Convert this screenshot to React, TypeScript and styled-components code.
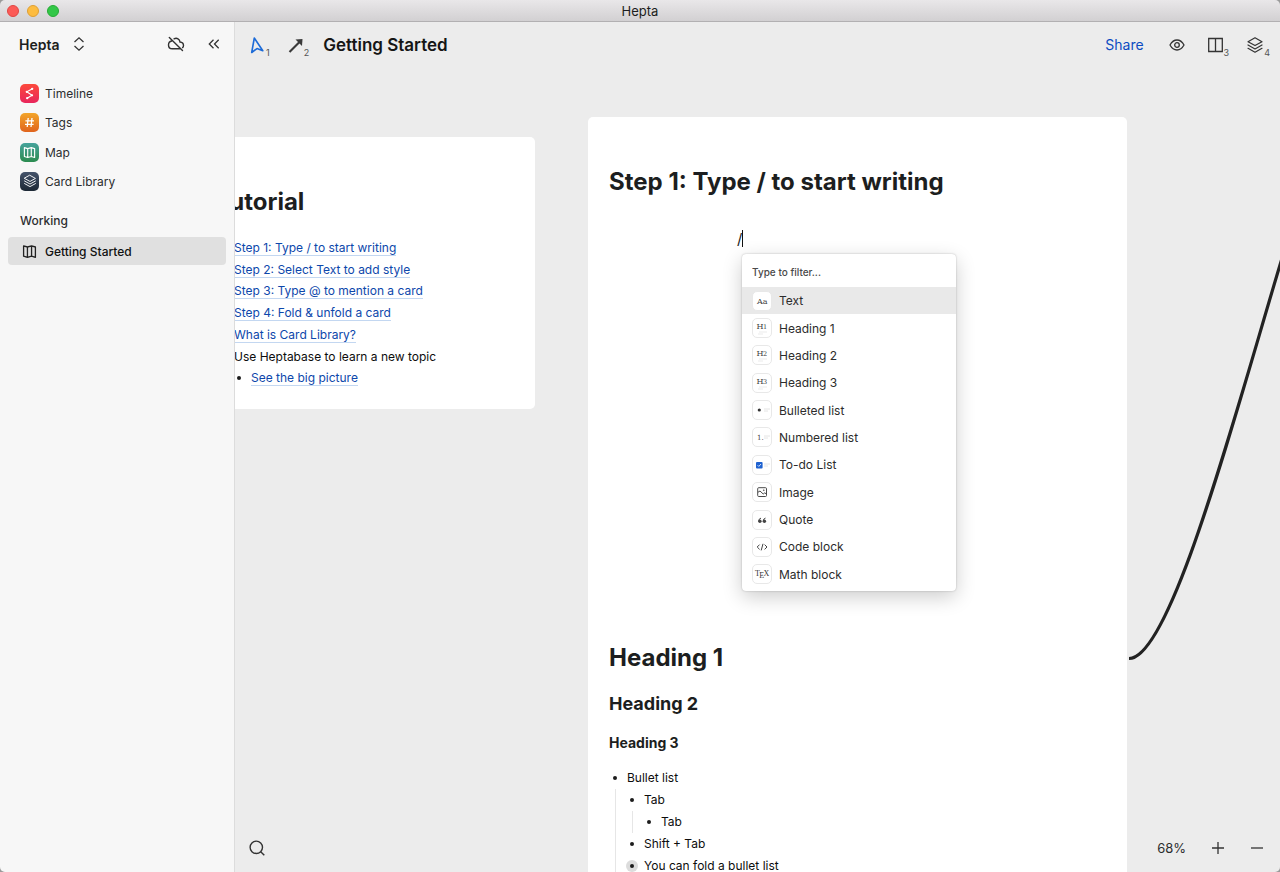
import React from "react";
import styled, { createGlobalStyle, css } from "styled-components";

const Global = createGlobalStyle`
  * { box-sizing: border-box; }
  body { margin: 0; background: #9a9a9a; font-family: Inter, "Liberation Sans", sans-serif; color: #1c1e20; }
  button, input { font: inherit; color: inherit; }
  button { border: 0; padding: 0; background: none; display: flex; align-items: center; cursor: pointer; }
  ul { list-style: none; margin: 0; padding: 0; }
  h1, h2, h3, h4 { margin: 0; }
  svg { display: block; flex: none; }
`;

const Window = styled.div`
  min-height: 100vh;
  display: flex;
  flex-direction: column;
  border-radius: 5px;
  overflow: hidden;
`;

const TitleBar = styled.header`
  position: relative;
  height: 22px;
  display: flex;
  align-items: center;
  justify-content: center;
  background: linear-gradient(#e9e7e9, #d2d0d2);
  border-bottom: 1px solid #b2b0b2;
  font-size: 13px;
  line-height: 16px;
`;

const Lights = styled.div`
  position: absolute;
  left: 7px;
  top: 5px;
  display: flex;
  gap: 8px;
`;

const Light = styled.button<{ $fill: string; $edge: string }>`
  width: 12px;
  height: 12px;
  border-radius: 50%;
  background: ${(p) => p.$fill};
  border: 1px solid ${(p) => p.$edge};
`;

const Body = styled.div`
  flex: 1;
  display: flex;
`;

const Sidebar = styled.aside`
  width: 235px;
  flex: none;
  background: #f7f7f7;
  border-right: 1px solid #dcdcdc;
  padding: 11px 8px;
`;

const SidebarTop = styled.div`
  display: flex;
  align-items: center;
  height: 22px;
  padding: 0 5px 0 11px;
`;

const Workspace = styled.button`
  gap: 12px;
  margin-right: auto;
  font-size: 14px;
  font-weight: 600;
`;

const Collapse = styled.button`
  margin-left: 22px;
`;

const Nav = styled.nav`
  display: grid;
  grid-auto-rows: 1fr;
  height: 117px;
  margin-top: 24px;
`;

const NavItem = styled.a<{ $active?: boolean }>`
  display: flex;
  align-items: center;
  gap: 6px;
  padding: 0 12px;
  font-size: 12px;
  color: #2b2d2f;
  text-decoration: none;
  ${(p) =>
    p.$active &&
    css`
      height: 28px;
      border-radius: 4px;
      background: #e0e0e0;
      color: #111;
      font-weight: 500;
    `}
`;

const Badge = styled.span<{ $from: string; $to: string }>`
  width: 19px;
  height: 19px;
  border-radius: 5px;
  display: flex;
  align-items: center;
  justify-content: center;
  background: linear-gradient(${(p) => p.$from}, ${(p) => p.$to});
`;

const PlainIcon = styled.span`
  width: 19px;
  display: flex;
  justify-content: center;
`;

const SectionTitle = styled.h2`
  padding: 0 12px;
  margin: 16px 0 7px;
  font-size: 12px;
  line-height: 18px;
  font-weight: 500;
  color: #2b2d2f;
`;

const Stage = styled.main`
  position: relative;
  flex: 1;
  min-width: 0;
  overflow: hidden;
  background: #ececec;
  display: flex;
  flex-direction: column;
  justify-content: space-between;
`;

const Board = styled.div`
  position: absolute;
  inset: 0;
  overflow: hidden;
`;

const Connector = styled.svg`
  position: absolute;
  left: 885px;
  top: 228px;
`;

const Bar = styled.div<{ $bottom?: boolean }>`
  position: relative;
  height: ${(p) => (p.$bottom ? 48 : 45)}px;
  padding: 0 10px 0 14px;
  display: flex;
  align-items: center;
`;

const Tools = styled.div`
  display: flex;
  align-items: center;
  gap: 17px;
`;

const BoardTitle = styled.h1`
  margin-left: 14px;
  margin-right: auto;
  font-size: 17px;
  line-height: 24px;
  font-weight: 600;
  color: #151515;
`;

const Key = styled.sub`
  font-size: 9px;
  line-height: 10px;
  vertical-align: baseline;
  align-self: flex-end;
  margin-bottom: -4px;
  color: #555;
`;

const Share = styled.button`
  margin-right: 25px;
  font-size: 14px;
  color: #0b4bc2;
`;

const View = styled.button`
  margin-right: 22px;
`;

const Zoom = styled.span`
  margin-left: auto;
  font-size: 13px;
  color: #2b2d2f;
`;

const ZoomButton = styled.button`
  margin-left: 25px;
  &:last-child { margin-right: 6px; }
`;

const Card = styled.article<{ $x: number; $y: number; $w: number }>`
  position: absolute;
  left: ${(p) => p.$x}px;
  top: ${(p) => p.$y}px;
  width: ${(p) => p.$w}px;
  padding: 48px 21px 20px;
  background: #fff;
  border-radius: 5px;
`;

const CardTitle = styled.h2`
  font-size: 24px;
  line-height: 34px;
  font-weight: 700;
`;

const Links = styled.ul`
  display: grid;
  grid-auto-rows: 1fr;
  height: 152px;
  margin-top: 18px;
  padding-left: 19px;
  font-size: 12px;
  color: #0d0d0d;
`;

const LinkRow = styled.li<{ $bullet?: boolean }>`
  display: flex;
  align-items: center;
  gap: 10px;
  white-space: nowrap;
  padding-left: ${(p) => (p.$bullet ? 3 : 0)}px;
`;

const CardLink = styled.a`
  line-height: 15px;
  color: #0d47ab;
  text-decoration: none;
  border-bottom: 1px solid #c3d7f1;
`;

const Dot = styled.span`
  width: 4px;
  height: 4px;
  flex: none;
  border-radius: 50%;
  background: #1c1c1c;
`;

const Typed = styled.div`
  height: 416px;
  margin-top: 26px;
  padding-left: 128px;
  font-size: 15px;
  line-height: 28px;
  display: flex;
  align-items: flex-start;
`;

const Caret = styled.span`
  width: 1px;
  height: 17px;
  margin-top: 5px;
  background: #111;
`;

const Sub = styled.h3`
  margin-top: 15px;
  font-size: 18px;
  line-height: 28px;
  font-weight: 700;
`;

const SubSub = styled.h4`
  margin-top: 14px;
  font-size: 14px;
  line-height: 22px;
  font-weight: 700;
`;

const Bullets = styled.ul`
  margin-top: 13px;
  font-size: 12px;
  line-height: 22px;
  color: #0d0d0d;
`;

const Nested = styled.ul`
  margin-left: 6px;
  padding-left: 11px;
  box-shadow: inset 1px 0 #e6e6e6;
`;

const BulletRow = styled.div`
  display: flex;
  align-items: center;
  gap: 6px;
`;

const Mark = styled.span<{ $folded?: boolean }>`
  width: 12px;
  height: 12px;
  border-radius: 50%;
  display: flex;
  align-items: center;
  justify-content: center;
  background: ${(p) => (p.$folded ? "#dcdcdc" : "transparent")};
`;

const Menu = styled.div`
  position: absolute;
  left: 507px;
  top: 232px;
  width: 214px;
  padding-bottom: 3px;
  border-radius: 4px;
  background: #fff;
  box-shadow: 0 0 2px rgba(0, 0, 0, 0.25), 0 6px 20px rgba(0, 0, 0, 0.2);
`;

const Filter = styled.input`
  display: block;
  width: 100%;
  height: 33px;
  padding: 3px 10px 0;
  border: 0;
  outline: 0;
  background: transparent;
  && { font-size: 10px; font-weight: 500; }
  &::placeholder { color: #4a4a4a; opacity: 1; }
`;

const MenuList = styled.div`
  display: grid;
  grid-auto-rows: 1fr;
  height: 301px;
`;

const MenuItem = styled.button<{ $active?: boolean }>`
  && {
    padding: 0 10px;
    gap: 7px;
    font-size: 12px;
    color: #2c2c2c;
    background: ${(p) => (p.$active ? "#e9e9e9" : "transparent")};
  }
`;

const Tile = styled.span`
  width: 20px;
  height: 20px;
  border: 1px solid #e8e8e8;
  border-radius: 5px;
  background: #fff;
`;

const serif = { fontFamily: '"DejaVu Serif", serif', fill: "#3f3f3f" };

const Heading = ({ n }: { n: number }) => (
  <>
    <text x="3.5" y="10" fontSize="8" {...serif}>H</text>
    <text x="10" y="10" fontSize="6.5" {...serif}>{n}</text>
    <path d="M6 13h8M5 15h5" stroke="#ebebeb" strokeWidth="1" />
  </>
);

const lines = <path d="M11 8h6M11 10h4" stroke="#e4e4e4" />;

const menuItems: [string, React.ReactNode][] = [
  ["Text", <text x="4" y="12" fontSize="8" {...serif}>Aa</text>],
  ["Heading 1", <Heading n={1} />],
  ["Heading 2", <Heading n={2} />],
  ["Heading 3", <Heading n={3} />],
  ["Bulleted list", <><circle cx="6.3" cy="9" r="1.6" fill="#333" />{lines}</>],
  ["Numbered list", <><text x="4" y="12" fontSize="7" {...serif}>1.</text>{lines}</>],
  ["To-do List", <><rect x="3" y="6" width="6.6" height="6.4" rx="1" fill="#1f62d0" /><path d="m4.6 9.2 1.2 1.2 2.2-2.4" fill="none" stroke="#fff" strokeWidth=".8" />{lines}</>],
  ["Image", <g fill="none" stroke="#4a4a4a" strokeWidth="1"><rect x="4.7" y="4.7" width="8.8" height="8.8" rx="1" /><path d="m5 9.2 2-1.2 3.200 3 1.600-1.200 1.700 1.400" /><circle cx="10.800" cy="7.200" r=".4" /></g>],
  ["Quote", <g fill="#444"><circle cx="6.900" cy="10.300" r="1.700" /><circle cx="11.400" cy="10.300" r="1.700" /><path d="M5.700 10.300q0-2.700 2.300-3.200M10.200 10.300q0-2.700 2.300-3.200" fill="none" stroke="#444" strokeWidth="1" /></g>],
  ["Code block", <path d="M6.600 6.600 4.200 9l2.400 2.400M11.600 6.600 14 9l-2.400 2.400M10 5.800 8.200 12.400" fill="none" stroke="#444" strokeWidth="1" />],
  ["Math block", <g fontFamily='"Liberation Serif", serif' fill="#333"><text x="2" y="11" fontSize="8">T</text><text x="6.300" y="13" fontSize="8">E</text><text x="10.500" y="11" fontSize="8">X</text></g>],
];

const MapIcon = ({ size, color }: { size: number; color: string }) => (
  <svg width={size} height={size} viewBox="0 0 16 16" fill="none" stroke={color} strokeWidth="1.400" strokeLinejoin="round">
    <path d="M1.700 2 5.800 3.200v11L1.700 13zM5.800 3.200 10.200 2v11l-4.400 1.200zM10.200 2l4.100 1.200v11L10.200 13z" />
  </svg>
);

const LayersIcon = ({ size, color }: { size: number; color: string }) => (
  <svg width={size} height={size} viewBox="0 0 18 18" fill="none" stroke={color} strokeWidth="1.200" strokeLinejoin="round" strokeLinecap="round">
    <path d="M9 1.800 16 5.700 9 9.600 2 5.700zM2 9l7 3.900L16 9M2 12.300l7 3.900 7-3.900" />
  </svg>
);

const links = [
  "Step 1: Type / to start writing",
  "Step 2: Select Text to add style",
  "Step 3: Type @ to mention a card",
  "Step 4: Fold & unfold a card",
  "What is Card Library?",
];

const Bullet = ({ text, folded }: { text: string; folded?: boolean }) => (
  <BulletRow>
    <Mark $folded={folded}><Dot /></Mark>
    {text}
  </BulletRow>
);

export default function App() {
  return (
    <Window>
      <Global />
      <TitleBar>
        <Lights>
          <Light aria-label="Close" $fill="#fc5b57" $edge="#df4744" />
          <Light aria-label="Minimize" $fill="#fdbc40" $edge="#de9f34" />
          <Light aria-label="Maximize" $fill="#33c748" $edge="#27aa35" />
        </Lights>
        Hepta
      </TitleBar>
      <Body>
        <Sidebar>
          <SidebarTop>
            <Workspace>
              Hepta
              <svg width="14" height="16" viewBox="0 0 14 16" fill="none" stroke="#333" strokeWidth="1.300">
                <path d="M2.500 6 7 1.800 11.500 6M2.500 10 7 14.200 11.500 10" />
              </svg>
            </Workspace>
            <button aria-label="Offline">
              <svg width="18" height="16" viewBox="0 0 18 16" fill="none" stroke="#333" strokeWidth="1.400" strokeLinecap="round">
                <path d="M2.300 1.500 15.500 14.500M4.700 5C2.800 5.400 1.500 7 1.500 9c0 2.300 1.700 3.800 3.800 3.800h7.500M7 2.800c3-1.300 5.700.3 6 3.200 2 .2 3.500 1.600 3.500 3.400 0 .8-.3 1.700-.9 2.200" />
              </svg>
            </button>
            <Collapse aria-label="Collapse sidebar">
              <svg width="14" height="14" viewBox="0 0 14 14" fill="none" stroke="#333" strokeWidth="1.300">
                <path d="M6.500 2.800 2.300 7l4.200 4.200M11.700 2.800 7.500 7l4.200 4.200" />
              </svg>
            </Collapse>
          </SidebarTop>
          <Nav>
            <NavItem href="#timeline">
              <Badge $from="#fc4a3c" $to="#e8265c">
                <svg width="19" height="19" viewBox="0 0 19 19" fill="#fff" stroke="#fff" strokeWidth="1.100">
                  <path d="M12 5 6.800 7.800 12 11.300 7.500 14" fill="none" />
                  <circle cx="12.200" cy="4.800" r=".6" /><circle cx="6.800" cy="7.800" r=".6" /><circle cx="12" cy="11.300" r=".6" /><circle cx="7.200" cy="14.200" r=".6" />
                </svg>
              </Badge>
              Timeline
            </NavItem>
            <NavItem href="#tags">
              <Badge $from="#f3a52a" $to="#e0641e">
                <svg width="19" height="19" viewBox="0 0 19 19" fill="none" stroke="#fff" strokeWidth="1.300">
                  <path d="M8.200 5 7.200 14M12 5l-1 9M5.400 7.800h8.600M5 11.300h8.600" />
                </svg>
              </Badge>
              Tags
            </NavItem>
            <NavItem href="#map">
              <Badge $from="#46a39c" $to="#2c8c50"><MapIcon size={13} color="#fff" /></Badge>
              Map
            </NavItem>
            <NavItem href="#cards">
              <Badge $from="#44536a" $to="#1d2835"><LayersIcon size={14} color="#fff" /></Badge>
              Card Library
            </NavItem>
          </Nav>
          <SectionTitle>Working</SectionTitle>
          <NavItem href="#started" $active>
            <PlainIcon><MapIcon size={15} color="#222" /></PlainIcon>
            Getting Started
          </NavItem>
        </Sidebar>
        <Stage>
          <Board>
            <Connector width="170" height="420" viewBox="0 0 170 420" fill="none" stroke="#222" strokeWidth="3.200">
              <path d="M9 408.500C50 408.500 112 175 160 15L166 -5" />
            </Connector>
            <Card $x={-41} $y={115} $w={341}>
              <CardTitle>Tutorial</CardTitle>
              <Links>
                {links.map((t) => (
                  <LinkRow key={t}><CardLink href="#card">{t}</CardLink></LinkRow>
                ))}
                <LinkRow>Use Heptabase to learn a new topic</LinkRow>
                <LinkRow $bullet><Dot /><CardLink href="#card">See the big picture</CardLink></LinkRow>
              </Links>
            </Card>
            <Card $x={353} $y={95} $w={539}>
              <CardTitle>Step 1: Type / to start writing</CardTitle>
              <Typed>/<Caret /></Typed>
              <CardTitle>Heading 1</CardTitle>
              <Sub>Heading 2</Sub>
              <SubSub>Heading 3</SubSub>
              <Bullets>
                <li>
                  <Bullet text="Bullet list" />
                  <Nested>
                    <li>
                      <Bullet text="Tab" />
                      <Nested><li><Bullet text="Tab" /></li></Nested>
                    </li>
                    <li><Bullet text="Shift + Tab" /></li>
                    <li><Bullet text="You can fold a bullet list" folded /></li>
                  </Nested>
                </li>
              </Bullets>
            </Card>
            <Menu>
              <Filter aria-label="Filter blocks" placeholder="Type to filter..." />
              <MenuList>
                {menuItems.map(([label, art], i) => (
                  <MenuItem key={label} $active={i === 0}>
                    <Tile><svg width="18" height="18" viewBox="0 0 18 18">{art}</svg></Tile>
                    {label}
                  </MenuItem>
                ))}
              </MenuList>
            </Menu>
          </Board>
          <Bar>
            <Tools>
              <button aria-label="Select">
                <svg width="17" height="18" viewBox="0 0 17 18" fill="none" stroke="#1c6bd8" strokeWidth="1.600" strokeLinejoin="round">
                  <path d="M5.300 2 13.800 14.800 8 12.600 2.700 16.500z" />
                </svg>
                <Key>1</Key>
              </button>
              <button aria-label="Connect">
                <svg width="17" height="18" viewBox="0 0 17 18" fill="none" stroke="#3a3a3a" strokeWidth="2.200">
                  <path d="M2.500 16 13 5.500" /><path d="M8.500 3.500 15.500 3 15 10z" fill="#3a3a3a" stroke="none" />
                </svg>
                <Key>2</Key>
              </button>
            </Tools>
            <BoardTitle>Getting Started</BoardTitle>
            <Share>Share</Share>
            <View aria-label="Preview">
              <svg width="16" height="16" viewBox="0 0 16 16" fill="none" stroke="#333" strokeWidth="1.300">
                <path d="M1 8c2-3.600 4.400-5 7-5s5 1.400 7 5c-2 3.600-4.400 5-7 5S3 11.600 1 8z" /><circle cx="8" cy="8" r="2.300" />
              </svg>
            </View>
            <Tools>
              <button aria-label="Split view">
                <svg width="17" height="18" viewBox="0 0 17 18" fill="none" stroke="#333" strokeWidth="1.300">
                  <path d="M1.700 2.500h13.600v13H1.700zM8.500 2.500v13" />
                </svg>
                <Key>3</Key>
              </button>
              <button aria-label="Card library">
                <LayersIcon size={18} color="#333" />
                <Key>4</Key>
              </button>
            </Tools>
          </Bar>
          <Bar $bottom>
            <button aria-label="Search">
              <svg width="16" height="16" viewBox="0 0 16 16" fill="none" stroke="#333" strokeWidth="1.400">
                <circle cx="7.300" cy="7.300" r="6.200" /><path d="m11.700 11.700 3.600 3.600" />
              </svg>
            </button>
            <Zoom>68%</Zoom>
            <ZoomButton aria-label="Zoom in">
              <svg width="14" height="14" viewBox="0 0 14 14" stroke="#333" strokeWidth="1.300"><path d="M1 7h12M7 1v12" /></svg>
            </ZoomButton>
            <ZoomButton aria-label="Zoom out">
              <svg width="14" height="14" viewBox="0 0 14 14" stroke="#333" strokeWidth="1.300"><path d="M1 7h12" /></svg>
            </ZoomButton>
          </Bar>
        </Stage>
      </Body>
    </Window>
  );
}
